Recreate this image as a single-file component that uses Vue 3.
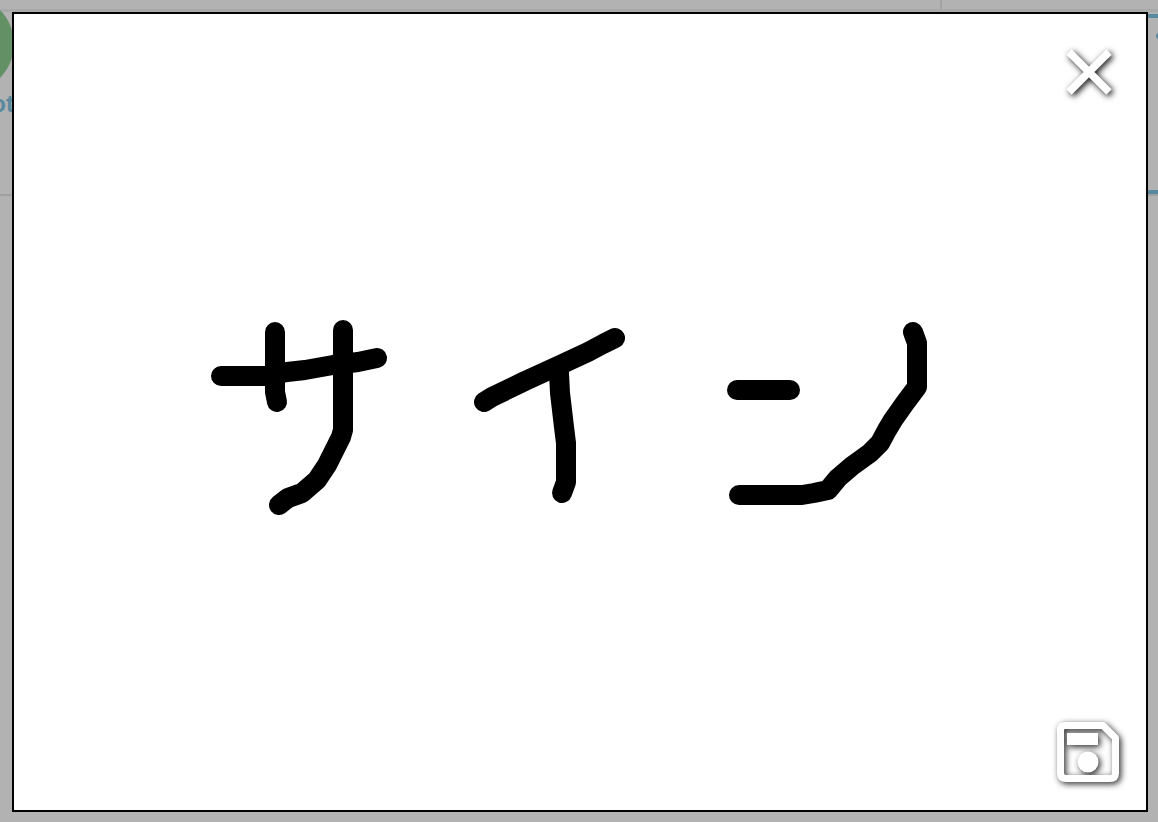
<script setup>
const strokes = [
  'M221 376 L268 376 L287 372 L305 370 L333 365 L358 362 L377 358',
  'M275 332 L275 392 L277 402',
  'M343 330 L343 430 L341 437 L334 451 L327 465 L317 480 L302 493 L288 498 L279 505',
  'M484 402 L492 397 L525 381 L560 365 L588 352 L603 344 L615 338',
  'M559 373 L560 393 L562 410 L564 427 L566 443 L566 482 L562 493',
  'M737 390 L790 390',
  'M739 495 L802 495 L814 493 L828 490 L838 478 L852 466 L870 453 L880 443 L887 430 L893 420 L905 403 L917 387 L917 343 L913 332',
]
</script>

<template>
  <div class="page">
    <div class="topbar">
      <div class="topbar-main"></div>
      <div class="topbar-side"></div>
    </div>
    <div class="header">
      <div class="profile">
        <div class="avatar"></div>
        <div class="name">Robot</div>
      </div>
      <div class="tab"><span class="tab-dot"></span></div>
    </div>

    <div class="overlay"></div>

    <div class="modal">
      <svg class="drawing" viewBox="14 14 1132 796" xmlns="http://www.w3.org/2000/svg">
        <path v-for="(d, i) in strokes" :key="i" :d="d" class="ink" />
      </svg>
      <button class="icon-btn close" aria-label="Close">
        <svg viewBox="0 0 44 44" width="44" height="44">
          <path d="M2 2 L42 42 M42 2 L2 42" class="close-x" />
        </svg>
      </button>
      <button class="icon-btn save" aria-label="Save">
        <svg viewBox="0 0 62 60" width="62" height="60">
          <path d="M8 3.5 H46 L58.5 16 V51 Q58.5 56.5 53 56.5 H9 Q3.5 56.5 3.5 51 V8 Q3.5 3.5 8 3.5 Z" class="save-frame" />
          <rect x="10" y="11" width="31" height="12" class="save-fill" />
          <circle cx="31" cy="40" r="10.5" class="save-fill" />
        </svg>
      </button>
    </div>
  </div>
</template>

<style>
html, body { margin: 0; background: #fff; }
</style>

<style scoped>
.page {
  position: relative;
  width: 1158px;
  height: 822px;
  overflow: hidden;
  background: #fff;
  font-family: "Liberation Sans", Arial, sans-serif;
}
.topbar {
  display: flex;
  height: 9px;
  background: #fff;
}
.topbar-main { width: 940px; border-right: 2px solid #e8e8e8; }
.topbar-side { flex: 1; }
.header {
  display: flex;
  justify-content: space-between;
  align-items: flex-start;
  height: 187px;
  box-sizing: border-box;
  background: #fff;
  border-top: 3px solid #f2f2f2;
  border-bottom: 2px solid #e6e6e6;
}
.profile {
  display: flex;
  flex-direction: column;
  align-items: flex-end;
  margin-left: -82px;
  width: 96px;
}
.avatar {
  width: 96px;
  height: 96px;
  margin-top: -16px;
  border-radius: 50%;
  background: #8ecf90;
  flex: none;
}
.name {
  margin-top: -1px;
  width: 94px;
  text-align: right;
  font-size: 24px;
  line-height: 26px;
  font-weight: 700;
  color: #80c4e4;
  white-space: nowrap;
}
.tab {
  position: relative;
  width: 10px;
  height: 180px;
  margin-top: 2px;
  box-sizing: border-box;
  border-top: 4px solid #80c4e4;
  border-bottom: 4px solid #80c4e4;
}
.tab-dot {
  position: absolute;
  top: 15px;
  right: -4px;
  width: 6px;
  height: 6px;
  border-radius: 50%;
  background: #80c4e4;
}
.overlay {
  position: absolute;
  inset: 0;
  background: rgba(0, 0, 0, 0.3);
}
.modal {
  position: absolute;
  left: 12px;
  top: 12px;
  width: 1136px;
  height: 800px;
  box-sizing: border-box;
  border: 2px solid #000;
  background: #fff;
}
.drawing {
  display: block;
  width: 1132px;
  height: 796px;
}
.ink {
  fill: none;
  stroke: #000;
  stroke-width: 20;
  stroke-linecap: round;
  stroke-linejoin: round;
}
.icon-btn {
  position: absolute;
  padding: 0;
  border: 0;
  background: none;
  line-height: 0;
}
.icon-btn svg { overflow: visible; }
.close {
  left: 1052.5px;
  top: 35.5px;
  filter: drop-shadow(2px 2px 3px rgba(0, 0, 0, 0.95));
}
.close-x {
  fill: none;
  stroke: #fff;
  stroke-width: 7.5;
}
.save {
  left: 1043px;
  top: 708px;
  filter: drop-shadow(2px 2px 3px rgba(0, 0, 0, 0.85));
}
.save-frame {
  fill: none;
  stroke: #fff;
  stroke-width: 7;
  stroke-linejoin: round;
}
.save-fill { fill: #fff; }
</style>
